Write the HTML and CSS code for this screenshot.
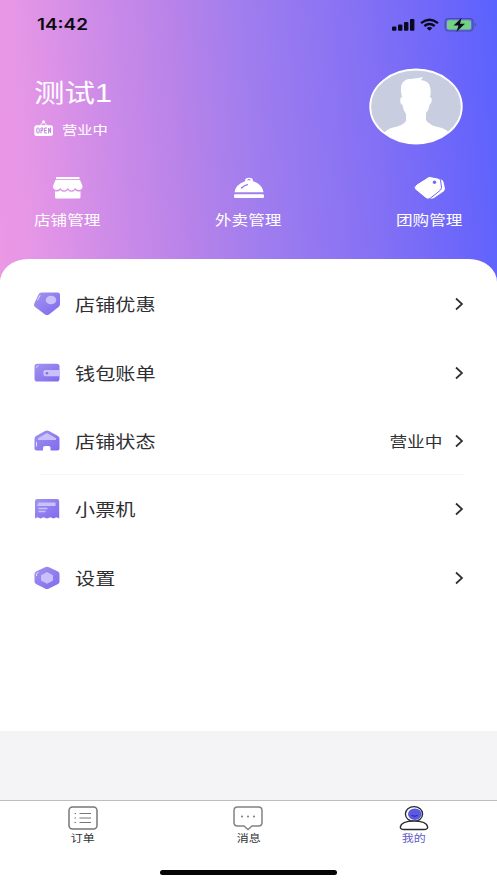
FILE: index.html
```html
<!DOCTYPE html>
<html lang="zh-CN">
<head>
<meta charset="utf-8">
<title>我的</title>
<link rel="stylesheet" href="styles.css">
</head>
<body>
<div class="app">
  <header class="header">
    <div class="status">
      <span class="time wide">14:42</span>
      <svg class="status-icons" width="88" height="18" viewBox="0 0 88 18">
        <g fill="#090a20"><rect x="1" y="10.500" width="4.400" height="4.300" rx="1"/><rect x="7" y="8.500" width="4.400" height="6.300" rx="1"/><rect x="13" y="6" width="4.400" height="8.800" rx="1"/><rect x="19" y="3" width="4.400" height="11.800" rx="1"/></g>
        <g fill="none" stroke="#090a20" stroke-width="2.300"><path d="M30 7.200Q38.500 0.400 47 7.200"/><path d="M33.300 10Q38.500 6 43.700 10"/></g>
        <path d="M35.600 12Q38.500 9.800 41.400 12L38.500 14.800Z" fill="#090a20"/>
        <rect x="54.200" y="2.500" width="27.800" height="12.500" rx="3.500" fill="none" stroke="#4a4f98" stroke-width="1.200"/>
        <rect x="56" y="4.200" width="24" height="9.200" rx="2" fill="#72d281"/>
        <path d="M83.800 6.500Q86.200 8.700 83.800 11Z" fill="#4a4f98"/>
        <path d="M70.500 2L62.500 9.500H67.500L65.500 15.700L74 7.700H69Z" fill="#090a20"/>
      </svg>
    </div>
    <div class="profile">
      <div>
        <h1 class="name"><span class="wide">测试1</span></h1>
        <div class="open">
          <svg width="20" height="18" viewBox="0 0 20 18">
            <path d="M5 6.500L9.500 2L14 6.500" fill="none" stroke="#fff" stroke-width="1"/><circle cx="9.500" cy="1.800" r="1.500" fill="#fff"/>
            <rect x="0.300" y="5.300" width="18.700" height="10.800" rx="2.500" fill="#fff"/>
            <g fill="none" stroke="#bd83df" stroke-width="1"><rect x="2.800" y="8" width="2.400" height="5" rx="1"/><path d="M7 13.500V8H8.800V10.700H7M13 8H10.700V13H13M10.700 10.500H12.700M14.600 13.500V8L16.600 13V7.500"/></g>
          </svg>
          <span class="wide">营业中</span>
        </div>
      </div>
      <svg class="avatar" width="94" height="78" viewBox="0 0 94 78">
        <defs><clipPath id="face"><ellipse cx="47" cy="38.500" rx="45.500" ry="36.800"/></clipPath></defs>
        <ellipse cx="47" cy="38.500" rx="45.800" ry="37" fill="#c9cde0" stroke="#fff" stroke-width="1.800"/>
        <path clip-path="url(#face)" fill="#fff" d="M7 78Q12 64 22 60Q34 58 37 53V46Q34 42 33.500 37Q30.500 36 31.500 30L33 29Q29 14 39 11Q44 11 54 9L52 12Q61 13 61.500 21Q62 25 61 29Q64 30 62 35L60.500 37Q60 42 57 45V52Q59 57 73 60Q84 64 88 78Z"/>
      </svg>
    </div>
    <nav class="actions">
      <a class="action">
        <svg width="32" height="26" viewBox="0 0 32 26" fill="#fff"><path d="M4 2H27.500V4.200H4Z"/><path d="M3.500 5H28L30.500 11Q30.500 15 27 15Q24.500 15 23.200 13Q21.500 15.500 19.500 15.500Q17.500 15.500 15.800 13Q14 15.500 12 15.500Q10 15.500 8.300 13Q7 15 4.500 15Q1 15 1 11Z"/><path d="M3 16.200Q6.500 17 8.300 14.900Q12 18.700 15.800 14.900Q19.500 18.700 23.200 14.900Q25 17 28.500 16.200V22Q28.500 23.500 27 23.500H4.500Q3 23.500 3 22Z"/></svg>
        <span class="wide">店铺管理</span>
      </a>
      <a class="action">
        <svg width="32" height="26" viewBox="0 0 32 26"><path fill="#fff" d="M1.500 17.300Q2.500 9.500 12 6.200Q11.800 2.700 16 2.700Q20.200 2.700 20 6.200Q29 9 30.500 17.300Z"/><rect x="1" y="19.300" width="30" height="3.700" rx="1.200" fill="#fff"/><path d="M8.500 13Q10.500 10.700 14.500 9.700" stroke="#8f74f0" stroke-width="1.300" stroke-linecap="round" fill="none"/><path d="M14.500 5Q16 4.100 17.500 5" stroke="#8f74f0" fill="none"/></svg>
        <span class="wide">外卖管理</span>
      </a>
      <a class="action">
        <svg width="32" height="26" viewBox="0 0 32 26"><path fill="#fff" d="M24 4Q28.800 4 29.500 7L31 13.500Q31 15 29.500 16.500L20 23Q17.500 24.500 15 23Z"/><path fill="#fff" stroke="#6f69f8" stroke-width="1" d="M3 9L12.500 3Q14 1.500 16 1.500L23.500 3Q26 3.500 26.500 5L27.500 12Q27.500 14 26 15.500L16 23.500Q14 25 12 23.500L1 14.500Q-.5 12.500 1 11Z"/><circle cx="20.500" cy="7.200" r="1.700" fill="#6f69f8"/></svg>
        <span class="wide">团购管理</span>
      </a>
    </nav>
  </header>

  <svg class="defs" width="0" height="0"><defs><linearGradient id="violet" x1="0" y1="0" x2="1" y2="1"><stop offset="0" stop-color="#a195ee"/><stop offset="1" stop-color="#8069ef"/></linearGradient></defs></svg>

  <main class="sheet">
    <a class="row">
      <svg class="row-icon" viewBox="0 0 28 24"><path fill="url(#violet)" d="M8.500 .5H24.500Q27 .5 27 2.500V12Q27 14 25.500 15L16 22.500Q14 23.500 12 22.500L1.500 14.500Q.5 12.500 1.500 11L5.500 2.500Q6.500 .5 8.500 .5Z"/><ellipse cx="18" cy="8" rx="5.300" ry="4.300" fill="#c9c1fb"/><path d="M4.500 8L7 3.500" stroke="#e2defd" stroke-linecap="round"/></svg>
      <span class="label"><span class="wide">店铺优惠</span></span>
      <svg class="chevron" viewBox="0 0 10 14"><path d="M2 1.500L8 7L2 12.500"/></svg>
    </a>
    <a class="row">
      <svg class="row-icon" viewBox="0 0 28 24"><rect x="1.500" y="2.800" width="25" height="17.700" rx="2.800" fill="url(#violet)"/><path d="M12 9H26.500V15.200H12Q10.300 15.200 10.300 12.100Q10.300 9 12 9Z" fill="#c9c1fb"/><circle cx="14" cy="12.200" r="1.300" fill="#8670df"/><path d="M3 6.500L5.500 4.300" stroke="#e2defd"/></svg>
      <span class="label"><span class="wide">钱包账单</span></span>
      <svg class="chevron" viewBox="0 0 10 14"><path d="M2 1.500L8 7L2 12.500"/></svg>
    </a>
    <a class="row">
      <svg class="row-icon" viewBox="0 0 28 24"><path fill="url(#violet)" d="M12 2Q14 1 16 2L25 7Q26.500 8 26.500 9.500V19.500Q26.500 21.500 24.500 21.500H17.500V18.500Q17.500 17 15.500 17H12Q10 17 10 18.500V21.500H3.500Q1.500 21.500 1.500 19.500V9.500Q1.500 8 3 7Z"/><path d="M14 4L23 9.300V11H5V9.300Z" fill="#c9c1fb"/><path d="M3.500 13V17.500" stroke="#e2defd"/></svg>
      <span class="label"><span class="wide">店铺状态</span></span>
      <span class="value"><span class="wide right">营业中</span></span>
      <svg class="chevron" viewBox="0 0 10 14"><path d="M2 1.500L8 7L2 12.500"/></svg>
    </a>
    <div class="divider"></div>
    <a class="row">
      <svg class="row-icon" viewBox="0 0 28 24"><path fill="url(#violet)" d="M4 2H24Q26.200 2 26.200 4V21.500L23.500 20.200L20.500 21.500L17.300 20.200L14 21.500L10.500 20.200L7.500 21.500L4.500 20.200L2 21.500V4Q2 2 4 2Z"/><path d="M6 5.500H22.500V9H4.500V7Z" fill="#c9c1fb"/><path d="M5.500 11.500H14.500M5.500 14.500H12.500" stroke="#c9c1fb" stroke-width="1.300"/></svg>
      <span class="label"><span class="wide">小票机</span></span>
      <svg class="chevron" viewBox="0 0 10 14"><path d="M2 1.500L8 7L2 12.500"/></svg>
    </a>
    <a class="row">
      <svg class="row-icon" viewBox="0 0 28 24"><path fill="url(#violet)" d="M12 1.200Q14 .3 16 1.200L25 5.500Q26.500 6.300 26.500 8V15.500Q26.500 17 25 18L16 22.500Q14 23.500 12 22.500L3 18Q1.500 17 1.500 15.500V8Q1.500 6.500 3 5.500Z"/><path d="M14 6L20 9.200V14.500L14 17.700L8 14.500V9.200Z" fill="#c9c1fb"/><path d="M3.500 10V8L5.500 6" fill="none" stroke="#e2defd"/></svg>
      <span class="label"><span class="wide">设置</span></span>
      <svg class="chevron" viewBox="0 0 10 14"><path d="M2 1.500L8 7L2 12.500"/></svg>
    </a>
  </main>

  <footer class="tabs">
    <div class="tab-list">
      <a class="tab">
        <svg width="32" height="25" viewBox="0 0 32 25" fill="none" stroke="#77777b"><rect x="2" y="1" width="28" height="22" rx="3.500" stroke-width="1.500"/><path d="M12.500 7.500H24M12.500 12H24M12.500 16.500H24M7.500 7.500H9M7.500 12H9M7.500 16.500H9" stroke-width="1"/></svg>
        <span class="wide">订单</span>
      </a>
      <a class="tab">
        <svg width="32" height="25" viewBox="0 0 32 25"><path d="M5.500 1H26.500Q30 1 30 4.500V16.500Q30 20 26.500 20H20L16 23.500L12 20H5.500Q2 20 2 16.500V4.500Q2 1 5.500 1Z" fill="none" stroke="#828286" stroke-width="1.500"/><g fill="#77777b"><circle cx="10" cy="10.500" r="1"/><circle cx="16" cy="10.500" r="1"/><circle cx="22" cy="10.500" r="1"/></g></svg>
        <span class="wide">消息</span>
      </a>
      <a class="tab active">
        <svg width="32" height="25" viewBox="0 0 32 25"><ellipse cx="16" cy="8" rx="8.600" ry="7.300" fill="#fff" stroke="#29292e" stroke-width="1.300"/><ellipse cx="16.800" cy="8.200" rx="6.800" ry="5.800" fill="#5b58e8"/><path d="M13.500 9.500Q16.500 11 19.500 9.500" fill="none" stroke="#29296f"/><path d="M2.300 21Q3.500 15 16 15Q28.500 15 29.700 21Q29.700 23.500 26 23.500H6Q2.300 23.500 2.300 21Z" fill="#fff" stroke="#29292e" stroke-width="1.300"/></svg>
        <span class="wide">我的</span>
      </a>
    </div>
    <div class="home-bar"></div>
  </footer>
</div>
</body>
</html>
```
FILE: styles.css
```css
* { box-sizing: border-box; }

body {
  margin: 0;
  font-family: "Noto Sans CJK SC", sans-serif;
  color: #303033;
}

svg { display: block; flex: none; }
.defs { position: absolute; }

/* Extended-width lettering */
.wide {
  display: inline-block;
  white-space: nowrap;
  transform: scaleX(1.22);
  transform-origin: left center;
}

.app {
  display: flex;
  flex-direction: column;
  width: 497px;
  height: 883px;
  overflow: hidden;
  background: #f4f3f6;
}

.header {
  flex: none;
  height: 285px;
  color: #fff;
  background: linear-gradient(86deg, #eb98e5 0%, #e596e6 7%, #c98ae8 25%, #b883e9 37%, #a07dee 51%, #8571f4 73%, #6965fb 92%, #5962fe 100%);
}

.status {
  display: flex;
  justify-content: space-between;
  align-items: center;
  height: 50px;
  padding: 0 18px 0 37px;
}

.time {
  font: 600 15.500px/20px Inter, sans-serif;
  color: #0b0910;
}

.profile {
  display: flex;
  justify-content: space-between;
  height: 118px;
  padding: 18px 34px 0 34px;
}

.name {
  height: 49px;
  margin: 0;
  font-family: "Liberation Sans", "Noto Sans CJK SC", sans-serif;
  font-size: 25px;
  font-weight: 400;
  line-height: 50px;
}

.open {
  display: flex;
  align-items: center;
  gap: 8px;
  height: 24px;
  font-size: 12.500px;
}

.actions {
  display: flex;
  justify-content: space-between;
  padding: 7px 34px 0 34px;
}

.action {
  display: flex;
  flex-direction: column;
  align-items: center;
  width: 67px;
  font-size: 13.600px;
  line-height: 24px;
  gap: 6px;
}

.action .wide,
.tab .wide { transform-origin: center; }

.sheet {
  flex: none;
  height: 472px;
  margin-top: -26px;
  padding: 11px 33px 0 33px;
  border-radius: 28px 28px 0 0 / 23px 23px 0 0;
  background: #fff;
}

.row {
  display: flex;
  align-items: center;
  height: 68.400px;
}

.divider {
  height: 1px;
  margin: -1px 0 0 6px;
  background: #f5f5f7;
}

.row-icon { width: 28px; height: 24px; }

.label {
  flex: 1;
  padding-left: 14px;
  font-size: 16.500px;
}

.value {
  margin-right: 12px;
  font-size: 14.500px;
}

.right { transform-origin: right center; }

.chevron {
  width: 10px;
  height: 14px;
  fill: none;
  stroke: #303033;
  stroke-width: 1.700;
}

.tabs {
  height: 83px;
  margin-top: auto;
  border-top: 1px solid #bdbdc1;
  background: #fff;
}

.tab-list {
  display: grid;
  grid-template-columns: repeat(3, 1fr);
  height: 69px;
  padding-top: 5px;
}

.tab {
  display: flex;
  flex-direction: column;
  align-items: center;
  font-size: 9.800px;
  line-height: 14px;
}

.active { color: #625bc8; }

.home-bar {
  width: 177px;
  height: 5px;
  margin: 0 auto;
  border-radius: 3px;
  background: #050505;
}
```
